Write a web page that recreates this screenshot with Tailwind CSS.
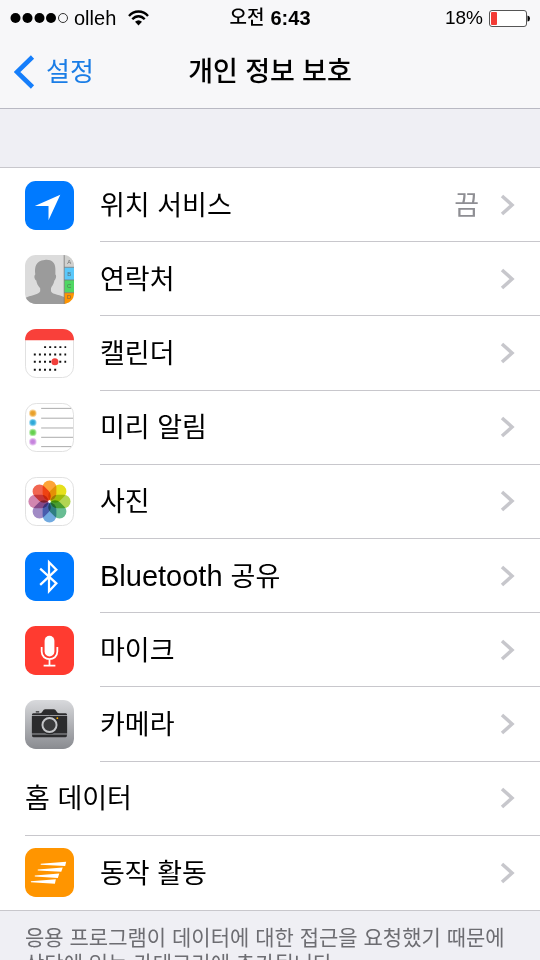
<!DOCTYPE html>
<html lang="ko">
<head>
  <meta charset="UTF-8" />
  <meta name="viewport" content="width=device-width, initial-scale=1" />
  <title>개인 정보 보호</title>
  <script src="https://cdn.jsdelivr.net/npm/@tailwindcss/browser@4"></script>
</head>
<body class="h-screen overflow-hidden flex flex-col bg-[#efeff4] text-black font-['Inter','Noto_Sans_CJK_KR',sans-serif]">

  <!-- Header -->
  <header class="shrink-0 h-[109px] bg-[#f7f7f9] border-b border-[#b9b9c3]">
    <div class="grid grid-cols-[1fr_auto_1fr] items-center h-9 px-2.5 text-[20px] leading-6 font-['Liberation_Sans','Noto_Sans_CJK_KR',sans-serif]">
      <div class="flex items-center">
        <svg class="w-[58px] h-3" viewBox="0 0 58 12">
          <circle cx="5.5" cy="6" r="5" />
          <circle cx="17.5" cy="6" r="5" />
          <circle cx="29.5" cy="6" r="5" />
          <circle cx="41" cy="6" r="5" />
          <circle cx="53" cy="6" r="4.5" fill="none" stroke="#333" />
        </svg>
        <span class="ml-1.5">olleh</span>
        <svg class="ml-3 w-[21px] h-4" viewBox="0 0 21 16" fill="none" stroke="#000" stroke-width="2.3">
          <path d="M1 6C6 0 15 0 20 6" />
          <path d="M4.3 9.3C8 5.2 13 5.2 16.7 9.3" />
          <path d="M7 11.8Q10.5 8.500 14 11.8L10.5 15.500Z" fill="#000" stroke="none" />
        </svg>
      </div>
      <div class="flex items-center gap-1.5 font-bold"><span class="text-[19px] font-medium">오전</span><span>6:43</span></div>
      <div class="flex items-center justify-end">
        <span class="text-[19px]">18%</span>
        <svg class="ml-1.5 w-[41px] h-[17px]" viewBox="0 0 41 17">
          <rect x="0.5" y="0.5" width="37" height="16" rx="2.5" fill="#fff" stroke="#555" />
          <rect x="2" y="2" width="6" height="13" rx="1" fill="#f33b35" />
          <path d="M38.500 5.5Q41 6 41 8.5T38.500 11.5Z" />
        </svg>
      </div>
    </div>
    <nav class="grid grid-cols-[1fr_auto_1fr] items-center h-[72px] px-3.5">
      <a href="#" class="flex items-center gap-[11px] text-[26px] leading-8 text-[#1a7de6]">
        <svg class="w-[21px] h-[34px]" viewBox="0 0 21 34" fill="none" stroke="#157efb" stroke-width="4.6">
          <path d="M18.5 2L3 17L18.5 32" />
        </svg>
        <span>설정</span>
      </a>
      <h1 class="text-[27px] leading-8 font-medium">개인 정보 보호</h1>
    </nav>
  </header>

  <main class="shrink-0 mt-[58px]">
    <!-- Settings list -->
    <ul class="grid auto-rows-fr min-h-[744px] bg-white border-y border-[#c8c7cc] text-[27px] leading-9">
      <li>
        <a href="#" class="flex items-center h-full pl-[25px]">
          <svg class="w-[49px] h-[49px] shrink-0 mr-[26px]" viewBox="0 0 50 50">
            <rect width="50" height="50" rx="11" fill="#007aff" />
            <path d="M36 14L10 25.5H24V40Z" fill="#fff" />
          </svg>
          <span class="flex-1 flex items-center self-stretch pr-[25px] border-b border-[#c8c7cc]">
            <span class="flex-1 pt-0.5">위치 서비스</span>
            <span class="mr-5 pt-0.5 text-[#8e8e93]">끔</span>
            <svg class="w-4 h-[22px]" viewBox="0 0 16 22" fill="none" stroke="#c7c7cc" stroke-width="3.5"><path d="M3 2L13 11L3 20" /></svg>
          </span>
        </a>
      </li>
      <li>
        <a href="#" class="flex items-center h-full pl-[25px]">
          <svg class="w-[49px] h-[49px] shrink-0 mr-[26px]" viewBox="0 0 50 50">
            <defs><clipPath id="tile"><rect width="50" height="50" rx="11" /></clipPath></defs>
            <g clip-path="url(#tile)">
              <rect width="50" height="50" fill="#dcdcdc" />
              <path d="M20 5C26 4 31 7 31 14V20C32.5 21 31.5 25 30 26C29.5 30 27 32 26.5 34V37C28 41 37 40 41 44V50H0V44C5 41 14 41 15.5 37V34C13 31 12 29 11.5 26C9.5 25 9 21 10.5 20C9.5 12 11 6 20 5Z" fill="#9b9b9b" />
              <rect x="40" width="10" height="12" fill="#d0d0ce" />
              <rect x="40" y="12.5" width="10" height="13" fill="#5ac8fa" />
              <rect x="40" y="25.5" width="10" height="13" fill="#4fd763" />
              <rect x="40" y="38.5" width="10" height="12" fill="#ff9500" />
              <path d="M40 0V50M40 12.5H50M40 25.5H50M40 38.5H50" stroke="#777" stroke-width="0.8" />
              <g font-family="Liberation Sans" font-size="6" fill="#555" fill-opacity="0.8" text-anchor="middle">
                <text x="45" y="9.5">A</text>
                <text x="45" y="21">B</text>
                <text x="45" y="34">C</text>
                <text x="45" y="45">D</text>
              </g>
            </g>
          </svg>
          <span class="flex-1 flex items-center self-stretch pr-[25px] border-b border-[#c8c7cc]">
            <span class="flex-1 pt-0.5">연락처</span>
            <svg class="w-4 h-[22px]" viewBox="0 0 16 22" fill="none" stroke="#c7c7cc" stroke-width="3.5"><path d="M3 2L13 11L3 20" /></svg>
          </span>
        </a>
      </li>
      <li>
        <a href="#" class="flex items-center h-full pl-[25px]">
          <svg class="w-[49px] h-[49px] shrink-0 mr-[26px]" viewBox="0 0 50 50">
            <rect x="0.5" y="0.5" width="49" height="49" rx="11" fill="#fff" stroke="#e0e0e0" />
            <path d="M0 11.5C0 4 5 0 11.5 0H38.5C45 0 50 4 50 11.5Z" fill="#f9403a" />
            <path d="M19.500 18.5H42M9 26H42M9 33.5H42M9 41.500H32" stroke="#111" stroke-width="2" stroke-dasharray="2 3.2" />
            <circle cx="30.500" cy="33.5" r="3.6" fill="#f03f3b" />
          </svg>
          <span class="flex-1 flex items-center self-stretch pr-[25px] border-b border-[#c8c7cc]">
            <span class="flex-1 pt-0.5">캘린더</span>
            <svg class="w-4 h-[22px]" viewBox="0 0 16 22" fill="none" stroke="#c7c7cc" stroke-width="3.5"><path d="M3 2L13 11L3 20" /></svg>
          </span>
        </a>
      </li>
      <li>
        <a href="#" class="flex items-center h-full pl-[25px]">
          <svg class="w-[49px] h-[49px] shrink-0 mr-[26px]" viewBox="0 0 50 50">
            <rect x="0.5" y="0.5" width="49" height="49" rx="11" fill="#fff" stroke="#e0e0e0" />
            <path d="M16.5 5.5H47M16.5 15.5H49M16.5 25.5H49M16.5 35H49M16.5 44.500H47" stroke="#aaa" />
            <g stroke-width="2" stroke-opacity="0.6">
              <circle cx="8" cy="10.5" r="2.8" fill="#e8a02c" stroke="#f0b24c" />
              <circle cx="8" cy="20" r="2.8" fill="#2fa8d8" stroke="#55bde4" />
              <circle cx="8" cy="30" r="2.8" fill="#65d04f" stroke="#86dc74" />
              <circle cx="8" cy="39.500" r="2.8" fill="#c583dd" stroke="#d49ce6" />
            </g>
          </svg>
          <span class="flex-1 flex items-center self-stretch pr-[25px] border-b border-[#c8c7cc]">
            <span class="flex-1 pt-0.5">미리 알림</span>
            <svg class="w-4 h-[22px]" viewBox="0 0 16 22" fill="none" stroke="#c7c7cc" stroke-width="3.5"><path d="M3 2L13 11L3 20" /></svg>
          </span>
        </a>
      </li>
      <li>
        <a href="#" class="flex items-center h-full pl-[25px]">
          <svg class="w-[49px] h-[49px] shrink-0 mr-[26px]" viewBox="0 0 50 50">
            <rect x="0.5" y="0.5" width="49" height="49" rx="11" fill="#fff" stroke="#e0e0e0" />
            <!-- petals -->
            <g class="[&>rect]:mix-blend-multiply">
              <rect x="18" y="3.500" width="14" height="20.500" rx="7" fill="#fda436" />
              <rect x="18" y="3.500" width="14" height="20.500" rx="7" fill="#e6e01c" transform="rotate(45 25 25)" />
              <rect x="18" y="3.500" width="14" height="20.500" rx="7" fill="#b2d552" transform="rotate(90 25 25)" />
              <rect x="18" y="3.500" width="14" height="20.500" rx="7" fill="#68bd93" transform="rotate(135 25 25)" />
              <rect x="18" y="3.500" width="14" height="20.500" rx="7" fill="#71aae0" transform="rotate(180 25 25)" />
              <rect x="18" y="3.500" width="14" height="20.500" rx="7" fill="#a18bc5" transform="rotate(225 25 25)" />
              <rect x="18" y="3.500" width="14" height="20.500" rx="7" fill="#d186b0" transform="rotate(270 25 25)" />
              <rect x="18" y="3.500" width="14" height="20.500" rx="7" fill="#f16651" transform="rotate(315 25 25)" />
            </g>
            <circle cx="25" cy="25" r="1.2" fill="#fff" />
          </svg>
          <span class="flex-1 flex items-center self-stretch pr-[25px] border-b border-[#c8c7cc]">
            <span class="flex-1 pt-0.5">사진</span>
            <svg class="w-4 h-[22px]" viewBox="0 0 16 22" fill="none" stroke="#c7c7cc" stroke-width="3.5"><path d="M3 2L13 11L3 20" /></svg>
          </span>
        </a>
      </li>
      <li>
        <a href="#" class="flex items-center h-full pl-[25px]">
          <svg class="w-[49px] h-[49px] shrink-0 mr-[26px]" viewBox="0 0 50 50">
            <rect width="50" height="50" rx="11" fill="#007aff" />
            <path d="M15.5 17L32 32L24.5 40V10.5L32 18L15.5 33.5" fill="none" stroke="#fff" stroke-width="2.3" />
          </svg>
          <span class="flex-1 flex items-center self-stretch pr-[25px] border-b border-[#c8c7cc]">
            <span class="flex-1 pt-0.5"><span class="text-[29px] font-['Liberation_Sans',sans-serif]">Bluetooth </span>공유</span>
            <svg class="w-4 h-[22px]" viewBox="0 0 16 22" fill="none" stroke="#c7c7cc" stroke-width="3.5"><path d="M3 2L13 11L3 20" /></svg>
          </span>
        </a>
      </li>
      <li>
        <a href="#" class="flex items-center h-full pl-[25px]">
          <svg class="w-[49px] h-[49px] shrink-0 mr-[26px]" viewBox="0 0 50 50">
            <rect width="50" height="50" rx="11" fill="#ff3b30" />
            <rect x="20" y="10" width="10" height="21" rx="5" fill="#fff" />
            <path d="M17 21.5V26C17 36.5 33 36.5 33 26V21.5M25 34V40M19 40.500H31" fill="none" stroke="#fff" stroke-width="1.8" />
          </svg>
          <span class="flex-1 flex items-center self-stretch pr-[25px] border-b border-[#c8c7cc]">
            <span class="flex-1 pt-0.5">마이크</span>
            <svg class="w-4 h-[22px]" viewBox="0 0 16 22" fill="none" stroke="#c7c7cc" stroke-width="3.5"><path d="M3 2L13 11L3 20" /></svg>
          </span>
        </a>
      </li>
      <li>
        <a href="#" class="flex items-center h-full pl-[25px]">
          <svg class="w-[49px] h-[49px] shrink-0 mr-[26px]" viewBox="0 0 50 50">
            <defs>
              <linearGradient id="metal" x2="0" y2="1"><stop stop-color="#d8d9dc" /><stop offset="1" stop-color="#898b90" /></linearGradient>
            </defs>
            <rect width="50" height="50" rx="11" fill="url(#metal)" />
            <path d="M8.500 13.500H15.500Q17 13.500 18 11.500Q19 9.500 20.500 9.500H29.500Q31 9.500 32 11.500Q33 13.500 34.500 13.500H41.500Q43 13.500 43 15.500H7Q7 13.500 8.500 13.500ZM11 11.500H14.500V12.700H11Z" fill="#2b2b2d" />
            <path d="M7 16.200H43V34.200H7Z" fill="#2b2b2d" />
            <path d="M7 35.200H43Q43 38 41 38H9Q7 38 7 35.200Z" fill="#2b2b2d" />
            <circle cx="25" cy="25.500" r="9.500" fill="#2b2b2d" />
            <circle cx="25" cy="25.500" r="7.200" fill="#3a3a3c" stroke="#c4c5c8" stroke-width="2" />
            <circle cx="33" cy="18.500" r="0.9" fill="#ffb000" />
          </svg>
          <span class="flex-1 flex items-center self-stretch pr-[25px] border-b border-[#c8c7cc]">
            <span class="flex-1 pt-0.5">카메라</span>
            <svg class="w-4 h-[22px]" viewBox="0 0 16 22" fill="none" stroke="#c7c7cc" stroke-width="3.5"><path d="M3 2L13 11L3 20" /></svg>
          </span>
        </a>
      </li>
      <li>
        <a href="#" class="flex items-center h-full pl-[25px]">
          <span class="flex-1 flex items-center self-stretch pr-[25px] border-b border-[#c8c7cc]">
            <span class="flex-1 pt-0.5">홈 데이터</span>
            <svg class="w-4 h-[22px]" viewBox="0 0 16 22" fill="none" stroke="#c7c7cc" stroke-width="3.5"><path d="M3 2L13 11L3 20" /></svg>
          </span>
        </a>
      </li>
      <li>
        <a href="#" class="flex items-center h-full pl-[25px]">
          <svg class="w-[49px] h-[49px] shrink-0 mr-[26px]" viewBox="0 0 50 50">
            <rect width="50" height="50" rx="11" fill="#ff9500" />
            <path d="M16 16L42 14L41 18.300L16 17ZM13 22L38.500 20L37 24.300L13 23ZM10 28L35 26L33.500 30.500L10 29ZM6 34L31.500 32L30.500 36.500L6 35Z" fill="#fff" />
          </svg>
          <span class="flex-1 flex items-center self-stretch pr-[25px]">
            <span class="flex-1 pt-0.5">동작 활동</span>
            <svg class="w-4 h-[22px]" viewBox="0 0 16 22" fill="none" stroke="#c7c7cc" stroke-width="3.5"><path d="M3 2L13 11L3 20" /></svg>
          </span>
        </a>
      </li>
    </ul>

    <p class="px-[25px] pt-3 text-[21px] leading-[26px] text-[#6d6d72] font-['Noto_Sans_CJK_KR',sans-serif]">응용 프로그램이 데이터에 대한 접근을 요청했기 때문에 상단에 있는 카테고리에 추가됩니다.</p>
  </main>

</body>
</html>
